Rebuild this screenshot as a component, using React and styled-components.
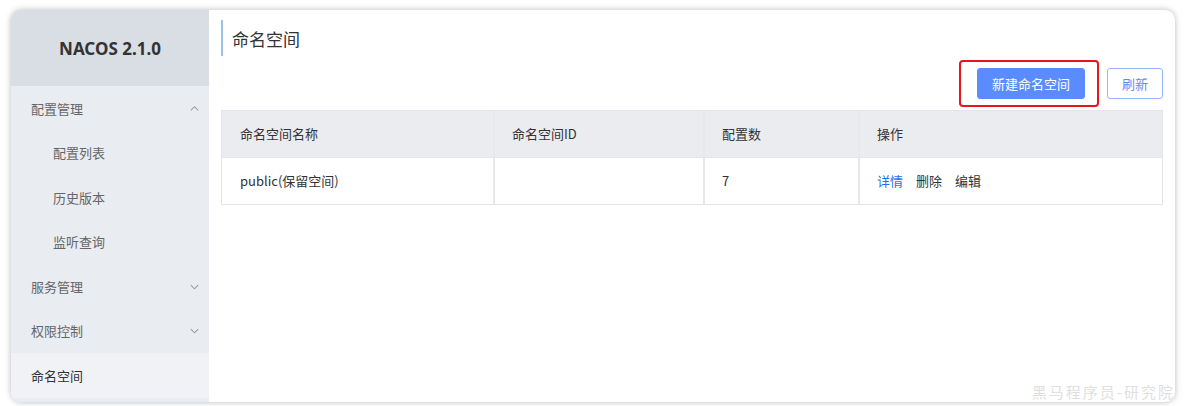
import React from "react";
import styled, { createGlobalStyle } from "styled-components";

const Global = createGlobalStyle`
  html, body { margin: 0; padding: 0; background: #ffffff; }
  body { font-family: "Noto Sans CJK SC", "Noto Sans", sans-serif; }
  * { box-sizing: border-box; }
`;

const Page = styled.div`
  width: 1188px;
  height: 406px;
  padding: 10px 13px 4px 11px;
`;

const Card = styled.div`
  position: relative;
  height: 392px;
  display: flex;
  border-radius: 10px;
  overflow: hidden;
  background: #fff;
  box-shadow: 0 0 6px rgba(0, 0, 0, 0.28);
`;

const Sidebar = styled.aside`
  width: 198px;
  flex: none;
  display: flex;
  flex-direction: column;
  background: #e9ecf1;
`;

const Brand = styled.div`
  height: 76px;
  display: flex;
  align-items: center;
  justify-content: center;
  background: #d9dde4;
  color: #333;
  font-family: "Noto Sans", "Noto Sans CJK SC", sans-serif;
  font-weight: 700;
  font-size: 17px;
`;

const MenuItem = styled.div`
  height: 44.5px;
  display: flex;
  align-items: center;
  justify-content: space-between;
  padding-left: ${(p) => (p.$sub ? 42 : 20)}px;
  padding-right: 9px;
  font-size: 13px;
  color: ${(p) => (p.$active ? "#333" : "#666")};
  background: ${(p) => (p.$active ? "#f1f2f6" : "transparent")};
`;

const Chevron = styled.svg`
  width: 11px;
  height: 11px;
  color: #9a9a9a;
`;

const Main = styled.main`
  flex: 1;
  display: flex;
  flex-direction: column;
  padding: 10px 12px 0 12px;
`;

const Title = styled.h1`
  margin: 0;
  height: 36px;
  display: flex;
  align-items: center;
  border-left: 2px solid #9cc1e8;
  padding-left: 9px;
  font-size: 17px;
  font-weight: 400;
  color: #333;
`;

const Toolbar = styled.div`
  display: flex;
  justify-content: flex-end;
  align-items: center;
  gap: 8px;
  margin-top: 4px;
  height: 47px;
`;

const Highlight = styled.div`
  border: 2px solid #e8161b;
  border-radius: 4px;
  padding: 6px 12px 6px 16px;
`;

const Button = styled.button`
  height: 31px;
  padding: 0 14px;
  border-radius: 3px;
  font-family: inherit;
  font-size: 13px;
  cursor: pointer;
  border: 1px solid ${(p) => (p.$primary ? "#5b8cff" : "#98b6ff")};
  background: ${(p) => (p.$primary ? "#5b8cff" : "#fff")};
  color: ${(p) => (p.$primary ? "#fff" : "#5b8cff")};
`;

const Table = styled.div`
  margin-top: 3px;
  display: grid;
  grid-template-columns: 271px 210px 155px 1fr;
  border: 1px solid #e3e5ea;
  border-bottom: none;
`;

const Cell = styled.div`
  height: 47px;
  display: flex;
  align-items: center;
  gap: 13px;
  padding-left: 17px;
  padding-bottom: 2px;
  font-size: 13px;
  color: #333;
  background: ${(p) => (p.$head ? "#ebecf0" : "#fff")};
  border-bottom: 1px solid #e3e5ea;
  border-left: ${(p) => (p.$first ? "none" : "2px solid #e6e8ec")};
  ${(p) => (p.$first ? "padding-left: 18px;" : "")}
`;

const Link = styled.span`
  color: ${(p) => (p.$primary ? "#1a73e8" : "#333")};
`;

const Watermark = styled.div`
  position: absolute;
  right: 0;
  bottom: 0;
  font-size: 15px;
  letter-spacing: 2px;
  color: #e0e0e0;
  font-family: "Noto Sans CJK SC", sans-serif;
`;

const Up = () => (
  <Chevron viewBox="0 0 12 12" fill="none" stroke="currentColor" strokeWidth="1.1">
    <path d="M2 8 L6 4 L10 8" />
  </Chevron>
);
const Down = () => (
  <Chevron viewBox="0 0 12 12" fill="none" stroke="currentColor" strokeWidth="1.1">
    <path d="M2 4.5 L6 8.5 L10 4.5" />
  </Chevron>
);

export default function App() {
  return (
    <>
      <Global />
      <Page>
        <Card>
          <Sidebar>
            <Brand>NACOS 2.1.0</Brand>
            <MenuItem>
              配置管理
              <Up />
            </MenuItem>
            <MenuItem $sub>配置列表</MenuItem>
            <MenuItem $sub>历史版本</MenuItem>
            <MenuItem $sub>监听查询</MenuItem>
            <MenuItem>
              服务管理
              <Down />
            </MenuItem>
            <MenuItem>
              权限控制
              <Down />
            </MenuItem>
            <MenuItem $active>命名空间</MenuItem>
          </Sidebar>
          <Main>
            <Title>命名空间</Title>
            <Toolbar>
              <Highlight>
                <Button $primary>新建命名空间</Button>
              </Highlight>
              <Button>刷新</Button>
            </Toolbar>
            <Table>
              <Cell $head $first>命名空间名称</Cell>
              <Cell $head>命名空间ID</Cell>
              <Cell $head>配置数</Cell>
              <Cell $head>操作</Cell>
              <Cell $first>public(保留空间)</Cell>
              <Cell></Cell>
              <Cell>7</Cell>
              <Cell>
                <Link $primary>详情</Link>
                <Link>删除</Link>
                <Link>编辑</Link>
              </Cell>
            </Table>
          </Main>
          <Watermark>黑马程序员-研究院</Watermark>
        </Card>
      </Page>
    </>
  );
}
